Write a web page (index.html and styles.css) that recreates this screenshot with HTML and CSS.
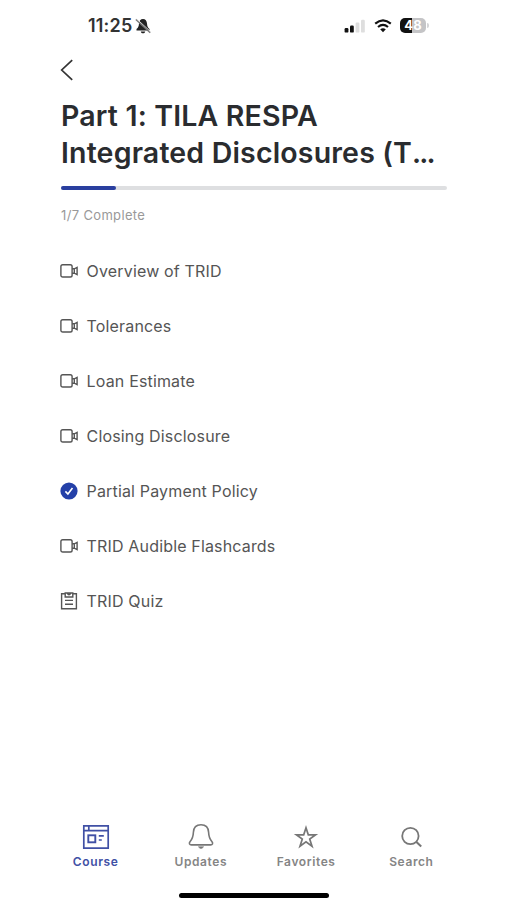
FILE: index.html
```html
<!DOCTYPE html>
<html lang="en">
<head>
    <meta charset="UTF-8">
    <meta name="viewport" content="width=device-width, initial-scale=1.0">
    <title>Course</title>
    <link rel="stylesheet" href="styles.css">
</head>
<body>
    <!-- Shared icon for the video lessons -->
    <svg class="sprite" width="0" height="0">
        <symbol id="video" viewBox="0 0 18 16">
            <rect x="0.9" y="1.8" width="11.2" height="12.2" rx="1.8"/>
            <path d="M12.1 5.8h2.2l2.8-1.4v7.2l-2.8-1.4h-2.2M14.3 5.8v4.4"/>
        </symbol>
    </svg>

    <div class="screen">
        <!-- Status bar -->
        <div class="status-bar">
            <div class="clock">
                <span class="time">11:25</span>
                <svg class="muted" width="16" height="16" viewBox="0 0 16 16">
                    <path d="M8 1C5.5 1 4.2 3 4 5.4C3.8 8.4 3.2 9.5 1.5 11v1.6h13V11C12.8 9.5 12.2 8.4 12 5.4C11.8 3 10.5 1 8 1zM5.8 13.4h4.4C9.9 16 6.1 16 5.8 13.4z" fill="#222"/>
                    <path d="M1.6 0.8L16 14.2" stroke="#eee" stroke-width="1"/>
                    <path d="M0.8 1.4L15.2 14.8" stroke="#777" stroke-width="1.3"/>
                </svg>
            </div>
            <div class="indicators">
                <svg class="signal" width="22" height="16" viewBox="0 0 22 16">
                    <rect x="0.6" y="10" width="3.8" height="4.6" rx="1.2" fill="#111"/>
                    <rect x="6" y="7.6" width="3.8" height="7" rx="1.2" fill="#111"/>
                    <rect x="11.6" y="4.6" width="3.8" height="10" rx="1.2" fill="#dedede"/>
                    <rect x="17" y="1.8" width="3.8" height="12.8" rx="1.2" fill="#dedede"/>
                </svg>
                <svg class="wifi" width="18" height="14" viewBox="0 0 18 14">
                    <path d="M1.2 4.6Q9-2 16.8 4.6M4 8Q9 3.7 14 8" fill="none" stroke="#111" stroke-width="2.1"/>
                    <path d="M9 13.2L6.2 10.3Q9 8.2 11.8 10.3z" fill="#111"/>
                </svg>
                <div class="battery">48</div>
                <span class="battery-tip"></span>
            </div>
        </div>

        <!-- Course header -->
        <div class="back">
            <svg width="14" height="22" viewBox="0 0 14 22">
                <path d="M12.2 1.2L1.7 11l10.5 9.8" fill="none" stroke="#333" stroke-width="1.7"/>
            </svg>
        </div>
        <h1 class="title">Part 1: TILA RESPA<br>Integrated Disclosures (T<span class="dots">...</span></h1>
        <div class="progress"><div class="progress-fill"></div></div>
        <p class="complete">1/7 Complete</p>

        <!-- Lessons -->
        <ul class="lessons">
            <li><svg class="icon"><use href="#video"/></svg><span>Overview of TRID</span></li>
            <li><svg class="icon"><use href="#video"/></svg><span>Tolerances</span></li>
            <li><svg class="icon"><use href="#video"/></svg><span>Loan Estimate</span></li>
            <li><svg class="icon"><use href="#video"/></svg><span>Closing Disclosure</span></li>
            <li>
                <svg class="icon done" viewBox="0 0 18 18">
                    <circle cx="9" cy="9" r="8.6" fill="#2440a8" stroke="none"/>
                    <path d="M5.4 9.4l2.5 2.6 4.6-6" stroke="#fff" stroke-width="1.6"/>
                </svg>
                <span>Partial Payment Policy</span>
            </li>
            <li><svg class="icon"><use href="#video"/></svg><span>TRID Audible Flashcards</span></li>
            <li>
                <svg class="icon quiz" viewBox="0 0 18 18">
                    <path d="M5.2 1.8H1.6v15h14.8v-15h-3.6M5.2 1h7.6v4H5.2zM7.2 1.2q1.8 3 3.6 0M5 8.4h8M5 12.2h8"/>
                </svg>
                <span>TRID Quiz</span>
            </li>
        </ul>

        <!-- Bottom navigation -->
        <nav class="tabs">
            <a class="tab active">
                <svg width="28" height="28" viewBox="0 0 28 28">
                    <path d="M1.8 2.8h24.4v22.4H1.8zM1.8 7.6h24.4M6.8 2.8v4.8M16.8 12.8h5M16.8 17h3" stroke-width="1.7"/>
                    <rect x="6.3" y="12.3" width="7" height="7" stroke-width="1.9"/>
                </svg>
                <span>Course</span>
            </a>
            <a class="tab">
                <svg width="28" height="28" viewBox="0 0 28 28">
                    <path d="M14 1.8c-4.8 0-7.4 3.2-7.6 7.5c-.2 4.6-.8 6.6-3.4 9.5c-1.3 1.7-.4 3.1 1.3 3.1h19.4c1.7 0 2.6-1.4 1.3-3.1c-2.6-2.9-3.2-4.9-3.4-9.5C21.4 5 18.8 1.8 14 1.8z" stroke-width="1.6"/>
                    <path d="M11.4 23.8q2.6 3.4 5.2 0z" fill="#777" stroke-width=".6"/>
                </svg>
                <span>Updates</span>
            </a>
            <a class="tab">
                <svg width="28" height="28" viewBox="0 0 28 28">
                    <path d="M14 4.8l2.3 7h7.3l-5.9 4.300 2.300 7.100-6-4.400-6 4.400 2.300-7.100-5.900-4.300h7.300z" stroke-width="1.700"/>
                </svg>
                <span>Favorites</span>
            </a>
            <a class="tab">
                <svg width="28" height="28" viewBox="0 0 28 28">
                    <circle cx="13.4" cy="13" r="8.2" stroke-width="1.8"/>
                    <path d="M19.2 18.700l5 4.800" stroke-width="2"/>
                </svg>
                <span>Search</span>
            </a>
        </nav>
        <div class="home-bar"></div>
    </div>
</body>
</html>
```
FILE: styles.css
```css
/* General */
* {
    box-sizing: border-box;
}
body {
    margin: 0;
    background-color: #fff;
    font-family: Inter, "Liberation Sans", sans-serif;
    color: #555;
}
.sprite {
    display: block;
}
.screen {
    display: flex;
    flex-direction: column;
    width: 421px;
    height: 900px;
    margin: 0 auto;
}

/* Status bar */
.status-bar {
    display: flex;
    justify-content: space-between;
    height: 51px;
    padding: 0 35px 0 45px;
}
.clock,
.indicators {
    display: flex;
    align-items: center;
}
.clock {
    gap: 2px;
}
.time {
    font-size: 18px;
    font-weight: 600;
    letter-spacing: 0.2px;
    color: #333;
}
.wifi {
    margin: 0 8px 0 8px;
}
.battery {
    width: 26px;
    height: 15px;
    border-radius: 5px;
    background: linear-gradient(90deg, #111 48%, #c4c4c6 48%);
    color: #fff;
    font-size: 13px;
    font-weight: 700;
    line-height: 15px;
    text-align: center;
}
.battery-tip {
    width: 2px;
    height: 5px;
    margin-left: 1px;
    border-radius: 0 2px 2px 0;
    background-color: #d4d4d6;
}

/* Course header */
.back {
    height: 47px;
    padding: 8px 0 0 17px;
}
.back svg {
    display: block;
}
.title {
    margin: 0 18px;
    font-size: 28.5px;
    font-weight: 600;
    line-height: 36.5px;
    letter-spacing: 0.17px;
    white-space: nowrap;
    color: #2a2c2f;
}
.dots {
    letter-spacing: -1.9px;
}
.progress {
    height: 4px;
    margin: 15px 17px 0 18px;
    border-radius: 2px;
    background-color: #dedfe1;
}
.progress-fill {
    width: 55px;
    height: 4px;
    border-radius: 2px;
    background-color: #2a3f9f;
}
.complete {
    margin: 15px 18px 0;
    font-size: 13px;
    line-height: 20px;
    letter-spacing: 0.35px;
    color: #999;
}

/* Lessons */
.lessons {
    margin: 18px 17px 0;
    padding: 0;
    list-style: none;
}
.lessons li {
    display: flex;
    align-items: center;
    gap: 8.6px;
    height: 55px;
    font-size: 16px;
    letter-spacing: 0.16px;
}
.icon {
    width: 18px;
    height: 16px;
    fill: none;
    stroke: #555;
    stroke-width: 1.4;
}
.done,
.quiz {
    height: 18px;
}

/* Bottom navigation */
.tabs {
    display: flex;
    margin-top: auto;
}
.tab {
    display: flex;
    flex: 1;
    flex-direction: column;
    align-items: center;
    gap: 2px;
    font-size: 12px;
    font-weight: 600;
    line-height: 18px;
    letter-spacing: 0.6px;
    color: #858585;
}
.tab svg {
    fill: none;
    stroke: #777;
}
.active {
    color: #4050a5;
}
.active svg {
    stroke: #4050a5;
}
.home-bar {
    width: 150px;
    height: 5px;
    margin: 22px auto 2px;
    border-radius: 3px;
    background-color: #000;
}
```
